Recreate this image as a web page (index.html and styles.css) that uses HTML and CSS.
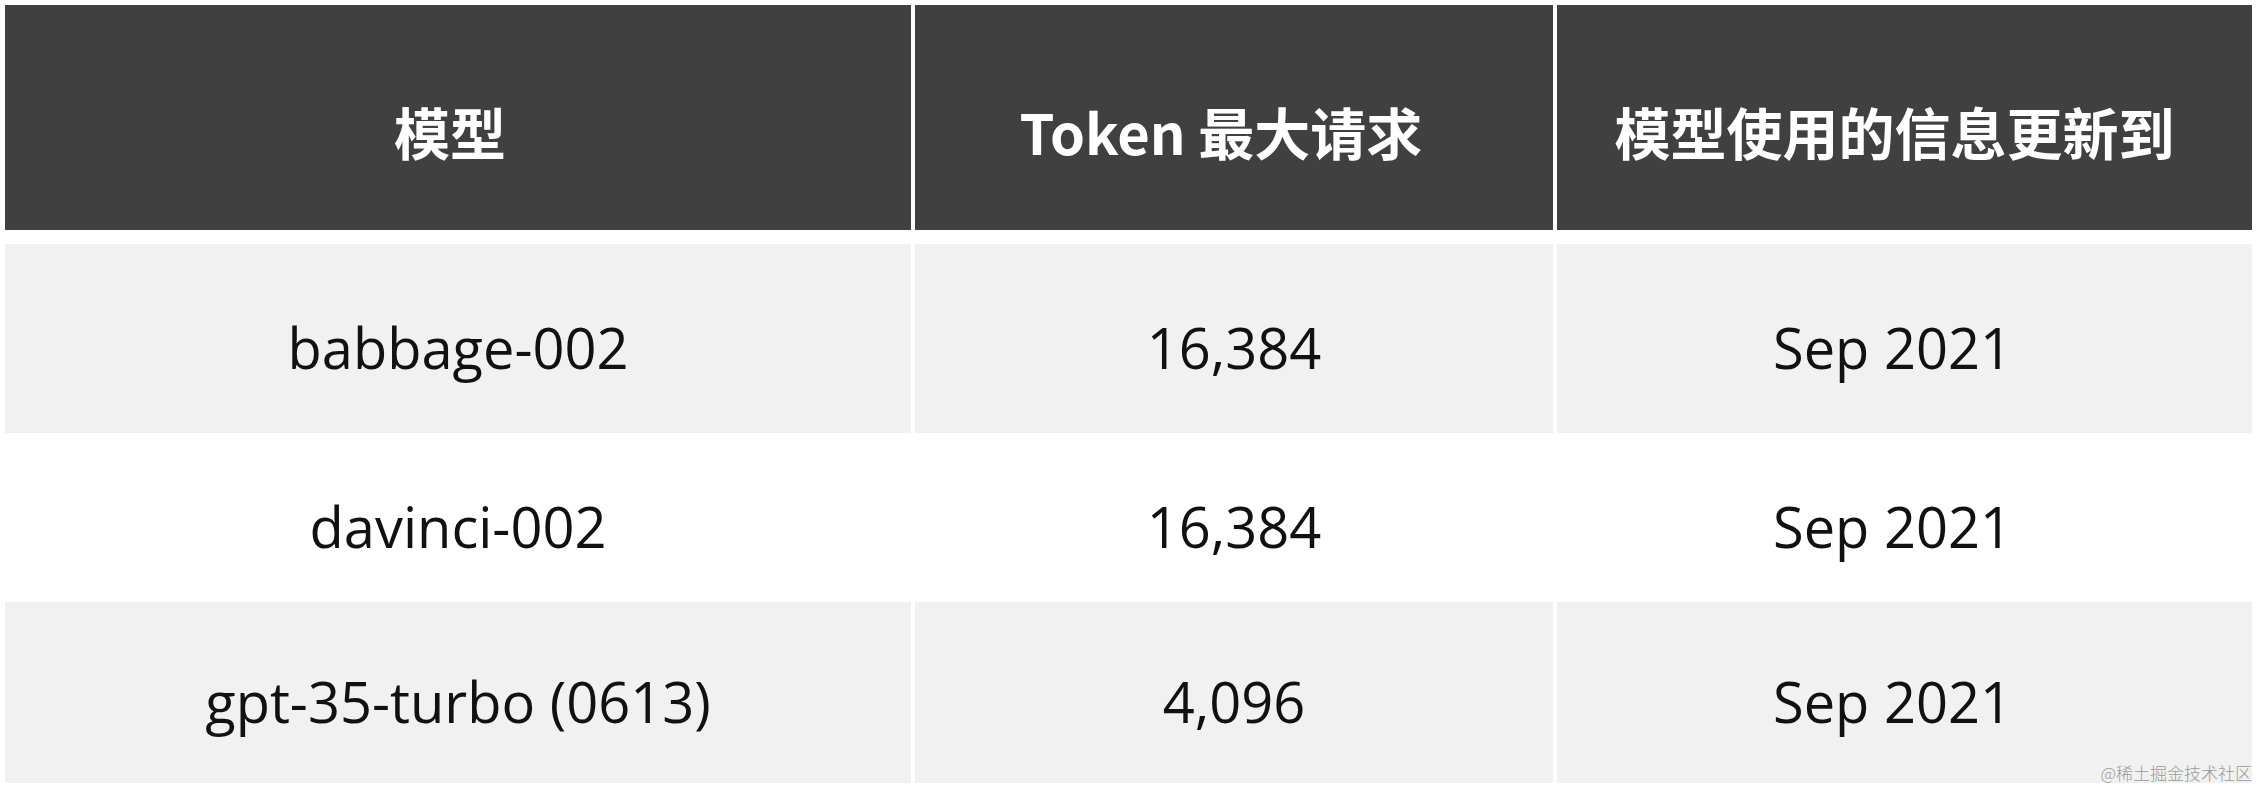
FILE: index.html
```html
<!DOCTYPE html>
<html lang="zh">
<head>
<meta charset="utf-8">
<title>模型</title>
<link rel="stylesheet" href="styles.css">
</head>
<body>
<div class="page">
  <div class="table">
    <div class="cell head c1">模型</div>
    <div class="cell head c2">Token 最大请求</div>
    <div class="cell head c3">模型使用的信息更新到</div>

    <div class="cell r1 shade c1">babbage-002</div>
    <div class="cell r1 shade c2">16,384</div>
    <div class="cell r1 shade c3">Sep 2021</div>

    <div class="cell r2 c1">davinci-002</div>
    <div class="cell r2 c2">16,384</div>
    <div class="cell r2 c3">Sep 2021</div>

    <div class="cell r3 shade c1">gpt-35-turbo (0613)</div>
    <div class="cell r3 shade c2">4,096</div>
    <div class="cell r3 shade c3">Sep 2021</div>
  </div>
  <div class="watermark">@稀土掘金技术社区</div>
</div>
</body>
</html>
```

FILE: styles.css
```css
html, body {
  margin: 0;
  padding: 0;
  background: #ffffff;
}

.page {
  position: relative;
  width: 2263px;
  height: 791px;
  padding: 5px 0 0 5px;
  box-sizing: border-box;
}

.table {
  display: grid;
  grid-template-columns: 906px 638px 695px;
  grid-template-rows: 225px 203px 169px 181px;
  column-gap: 4px;
}

.cell {
  display: flex;
  align-items: center;
  justify-content: center;
  box-sizing: border-box;
  font-family: "Open Sans", "Noto Sans CJK SC", sans-serif;
  font-size: 56px;
  color: #111111;
  white-space: nowrap;
}

.head {
  background: #404040;
  color: #ffffff;
  font-family: "Noto Sans CJK SC", "Noto Sans", sans-serif;
  font-weight: 700;
  font-size: 56px;
  padding-top: 26px;
}

.head.c1 { padding-right: 16px; }
.head.c2 { padding-right: 26px; }
.head.c3 { padding-right: 20px; }

.r1 { margin-top: 14px; }

.r1, .r2, .r3 { padding-top: 16px; }

.shade {
  background: #f1f1f1;
}

.cell.c3:not(.head) { padding-right: 24px; }

.watermark {
  position: absolute;
  right: 11px;
  bottom: 6px;
  font-family: "Noto Sans CJK SC", sans-serif;
  font-weight: 300;
  font-size: 17px;
  color: #9a9a9a;
}
```
